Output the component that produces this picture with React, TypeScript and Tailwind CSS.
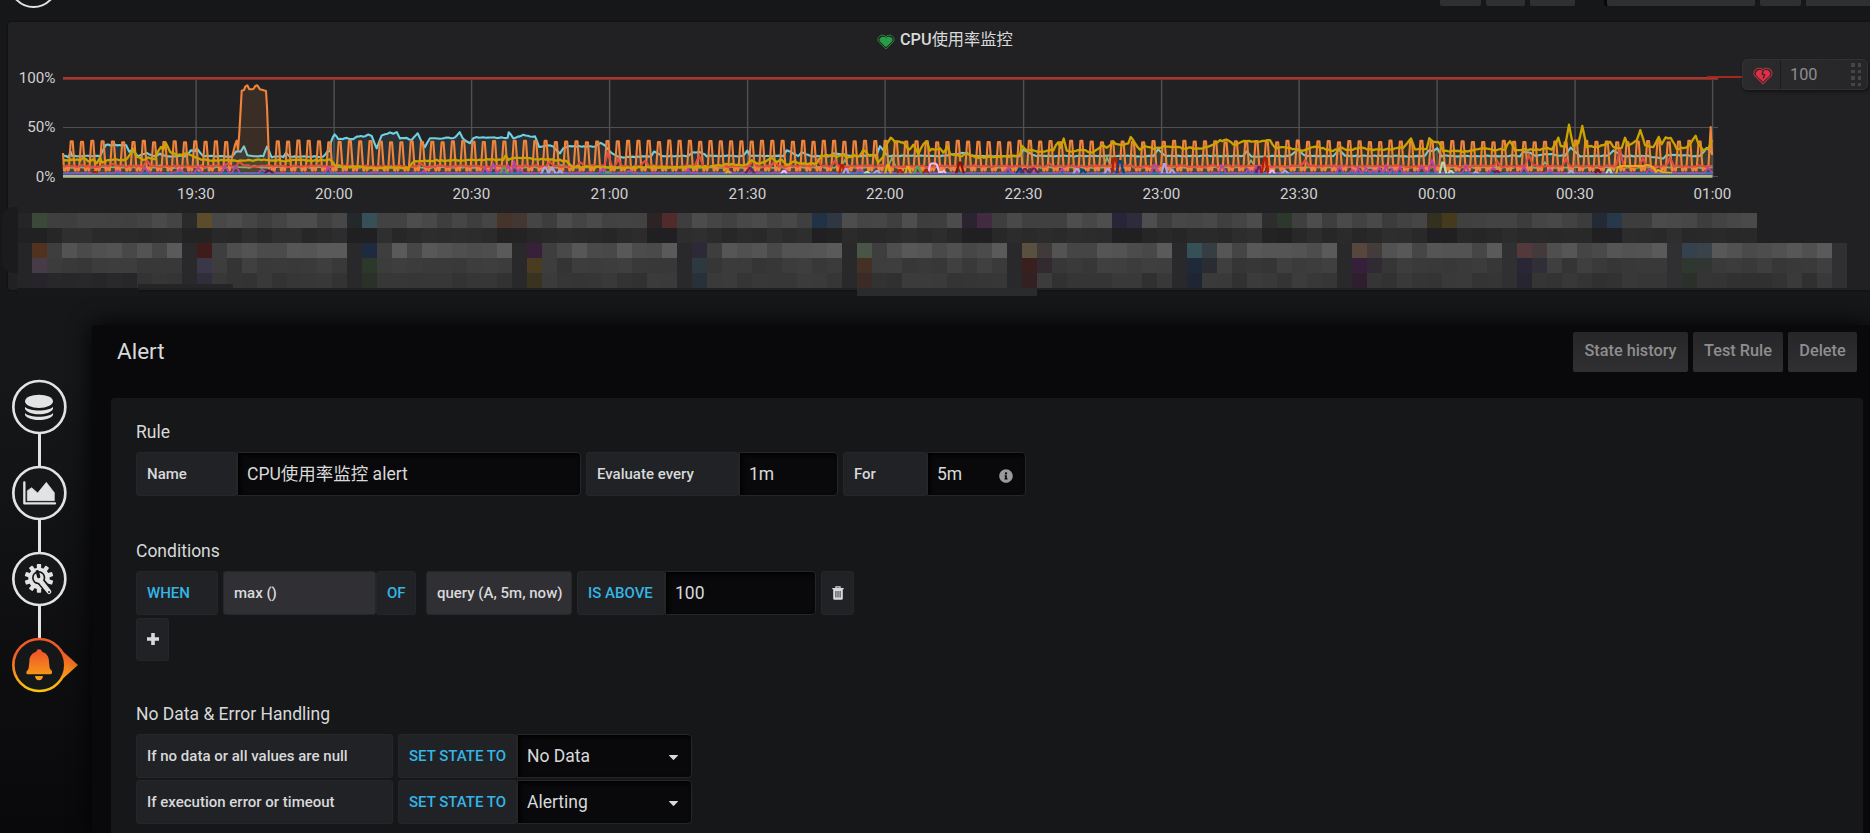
import React from "react";
import { FaInfoCircle } from "react-icons/fa";

type Pt = [number, number];

const BOTTOM = 177;

const noise = (n: number) => {
  const v = Math.sin(n * 12.9898) * 43758.5453;
  return v - Math.floor(v);
};

/* Points are stored as flat x,y lists in thirds of a pixel from a segment origin. */
const seg = (x0: number, flat: number[]): Pt[] => {
  const out: Pt[] = [];
  for (let i = 0; i < flat.length; i += 2) out.push([x0 + flat[i] / 3, 70 + flat[i + 1] / 3]);
  return out;
};

const roughen = (pts: Pt[], amp: number, seed: number): Pt[] => {
  const out: Pt[] = [];
  for (let i = 0; i < pts.length - 1; i++) {
    const [ax, ay] = pts[i];
    const [bx, by] = pts[i + 1];
    const n = Math.max(1, Math.round((bx - ax) / 2.3));
    for (let j = 0; j < n; j++) {
      const t = j / n;
      const jitter = (noise(seed + i * 7.3 + j * 3.1) - 0.5) * 2 * amp;
      out.push([ax + (bx - ax) * t, ay + (by - ay) * t + jitter]);
    }
  }
  out.push(pts[pts.length - 1]);
  return out;
};

const line = (pts: Pt[]) => "M" + pts.map((p) => p[0].toFixed(1) + " " + p[1].toFixed(1)).join("L");
const area = (pts: Pt[]) =>
  line(pts) + "L" + pts[pts.length - 1][0].toFixed(1) + " " + BOTTOM + "L" + pts[0][0].toFixed(1) + " " + BOTTOM + "Z";

const cyan = roughen(
  [
    ...seg(0, [190,256,205,262,212,245,216,258,300,258,318,225,378,225,388,245,395,240,415,258,440,250,460,258,480,252,500,258,560,258,572,240,585,245,590,235,608,258,695,260,708,245,722,245,732,230,742,255,760,260,790,258,801,230,812,255,815,262,840,258,850,262,858,248,870,260,970,260,982,245,990,245,993,215,1004,192,1015,208,1040,205,1060,208,1070,200,1095,198,1105,193,1115,198,1130,236,1145,195,1155,192,1170,188,1180,192,1190,185,1200,205,1220,205,1235,210,1253,190,1265,215,1275,230,1290,205,1320,205,1365,203,1379,185,1388,205,1405,217]),
    ...seg(470, [0,218,10,205,20,202,100,203,113,203,116,186,130,205,150,198,160,195,180,200,195,200,207,230,240,225,250,230,270,250,280,235,300,228,375,230,392,220,405,225,420,245,440,258,460,262,545,258,552,245,575,258,655,258,665,248,690,245,710,258,820,258,832,242,840,258,940,258,950,240,985,258,995,248,1020,258,1080,258,1090,250,1150,258,1220,255,1230,230,1243,245,1255,258,1405,258]),
    ...seg(940, [0,258,80,248,95,258,240,258,250,238,270,250,285,258,640,258,655,238,665,250,680,258,910,258,920,245,935,260,1050,258,1075,238,1095,258,1180,258,1196,238,1215,258,1345,258]),
    ...seg(1390, [0,258,105,258,115,240,130,245,142,236,155,258,390,258,400,245,420,248,440,258,470,252,525,258,542,232,555,245,570,258,655,258,670,242,700,258,770,258,820,265,830,255,930,258,950,235,967,250]),
  ],
  0.5,
  3,
);

const yellow = roughen(
  [
    ...seg(0, [190,270,240,270,250,262,265,272,280,268,290,280,300,262,306,278,330,270,375,270,390,255,400,238,410,262,430,268,450,262,465,270,475,240,483,232,490,240,498,220,510,245,530,255,560,252,590,262,610,270,740,272,785,268,850,272,990,270,998,278,1005,285,1030,292,1070,290,1100,293,1225,293,1240,275,1260,272,1380,270,1405,268]),
    ...seg(470, [0,270,100,270,107,258,115,270,140,262,200,268,290,272,305,290,430,292,720,290,780,282,800,285,830,285,845,270,865,280,885,275,905,265,920,275,935,268,950,285,975,275,1000,282,1040,280,1055,258,1080,255,1100,260,1120,255,1130,265,1150,255,1165,262,1180,240,1200,258,1215,255,1225,275,1240,260,1250,220,1262,205,1275,215,1300,215,1318,240,1330,222,1345,250,1360,222,1370,215,1380,240,1405,236]),
    ...seg(940, [0,235,10,250,22,228,30,250,60,258,85,252,110,262,200,260,240,255,245,228,260,240,300,245,340,240,355,215,362,235,371,205,380,240,400,245,430,240,455,250,475,235,490,225,500,235,520,215,535,225,565,222,572,200,585,220,600,240,615,228,640,235,670,230,700,232,760,235,790,235,820,225,840,212,865,210,880,225,920,212,960,215,990,212,1005,235,1030,232,1090,240,1120,230,1150,235,1180,242,1205,235,1230,240,1260,232,1300,240,1345,238]),
    ...seg(1390, [0,240,40,232,63,205,75,238,110,235,118,203,130,215,145,215,160,242,220,245,270,235,320,240,345,238,360,212,375,240,450,238,470,232,485,238,505,205,512,230,525,230,537,165,550,230,565,220,577,168,590,230,610,230,640,228,660,215,670,232,695,235,705,205,715,230,740,210,751,178,765,225,790,232,806,200,815,225,827,203,842,205,860,235,880,235,895,230,917,195,925,220,940,242,955,235,966,210]),
  ],
  0.8,
  11,
);

const plateau = seg(0, [690,300,696,262,705,225,710,212,714,240,718,190,725,62,732,60,736,50,742,46,748,58,757,58,762,55,766,48,772,46,780,58,788,60,798,63,801,110,804,190,808,300]);

const orange: Pt[] = (() => {
  const out: Pt[] = [[63, 153], [64, 170.5]];
  let plateauDrawn = false;
  for (let k = 0; k < 160; k++) {
    const x = 71.8 + k * 10.303;
    if (x > 235 && x < 270) {
      if (!plateauDrawn) out.push(...plateau);
      plateauDrawn = true;
      continue;
    }
    if (x > 1708) break;
    const top = 140.6 + noise(k + 5) * 1.8;
    out.push([x - 6.4, 170.6], [x - 5.9, 167.6], [x - 4.4, 167.6], [x - 3.8, 170.6], [x - 3.1, 170.2], [x - 1.1, top], [x + 0.9, top], [x + 3, 170.4]);
  }
  out.push([1706, 168], [1708.5, 165], [1710.7, 127], [1712, 155]);
  return out;
})();

const bumps = (base: number, amp: number, list: [number, number][], seed: number): Pt[] => {
  const out: Pt[] = [[63, base]];
  let last = 63;
  for (const [x, y] of list) {
    if (x - 4 > last) out.push([x - 4, base]);
    out.push([x, y]);
    last = x + 4;
    out.push([last, base]);
  }
  out.push([1712.5, base]);
  return roughen(out, amp, seed);
};

const red = bumps(166.2, 0.9, [[112,164],[147,161],[228,163],[240,162],[420,163],[550,161],[580,162],[608,153],[618,160],[645,160],[699,155],[753,161],[775,161],[818,160],[835,161],[880,164],[1050,164],[1305,160],[1497,161],[1529,155],[1566,159],[1620,149],[1643,158],[1670,158]], 21);
const green = bumps(167.4, 0.6, [[160,165],[255,166],[561,165],[845,160],[892,158],[1107,158],[1130,164],[1251,160],[1268,165],[1440,165],[1545,162]], 25);
const magenta = bumps(173.2, 0.9, [[118,171],[145,167],[180,170],[198,167],[225,166],[236,166],[262,170],[328,168],[375,171],[424,171],[485,168],[493,164],[501,169],[508,166],[514,161],[520,168],[603,169],[630,170],[688,170],[730,171],[785,170],[860,169],[1008,168],[1062,169],[1155,164],[1222,166],[1248,169],[1256,167],[1340,167],[1352,170],[1358,169],[1366,168],[1372,170],[1379,168],[1386,166],[1392,169],[1400,168],[1422,166],[1432,160],[1466,166],[1493,168],[1524,167],[1550,169],[1650,169],[1708,168]], 31);

/* Short-lived series that only rise above the axis for a moment. */
const blips: [string, number, number, number][] = [
  ["#bf1b00", 95, 172, 3], ["#511749", 269, 170.5, 5], ["#629e51", 504, 168, 4], ["#629e51", 608, 172, 3],
  ["#aea2e0", 545, 167.5, 4], ["#aea2e0", 552, 168, 4], ["#aea2e0", 560, 171, 3],
  ["#6d1f62", 750, 168, 5], ["#f9bafb", 784, 171, 3], ["#e5ac0e", 728, 171.5, 3],
  ["#bf1b00", 842, 165, 3], ["#aea2e0", 846, 169, 3], ["#b7dbab", 867, 172, 3], ["#aea2e0", 877, 171, 4],
  ["#e5ac0e", 888, 165, 3], ["#bf1b00", 900, 170, 3], ["#e5ac0e", 908, 167, 3], ["#629e51", 918, 167, 4],
  ["#bf1b00", 926, 170, 3], ["#890f02", 960, 162.5, 4],
  ["#0a437c", 1020, 168.5, 4], ["#6d1f62", 1025, 169, 5], ["#6d1f62", 1034, 168.5, 5],
  ["#aea2e0", 1077, 169, 4], ["#0a437c", 1083, 170, 3], ["#aea2e0", 1108, 169, 4],
  ["#bf1b00", 1115, 158, 3.5], ["#0a437c", 1120, 161, 4], ["#aea2e0", 1164.5, 164, 3], ["#aea2e0", 1172, 170, 3],
  ["#6d1f62", 1259, 167, 3], ["#bf1b00", 1265, 157.5, 3.5], ["#f9bafb", 1272, 170.5, 3], ["#aea2e0", 1285, 171, 4],
  ["#b7dbab", 1443, 162.5, 3.5], ["#b7dbab", 1451, 171, 3], ["#aea2e0", 1476, 172, 3], ["#6d1f62", 1497, 171, 3],
  ["#aea2e0", 1571, 171, 3], ["#890f02", 1598, 170, 3], ["#b7dbab", 1609, 169.5, 3],
];

const ticks: [number, string][] = [
  [196, "19:30"], [334, "20:00"], [471.5, "20:30"], [609.5, "21:00"], [747.5, "21:30"], [885, "22:00"],
  [1023.5, "22:30"], [1161.5, "23:00"], [1299, "23:30"], [1437, "00:00"], [1575, "00:30"], [1712.5, "01:00"],
];

function Chart() {
  return (
    <svg className="block h-[150px] w-[1862px]" viewBox="8 55 1862 150">
      {ticks.map(([x]) => (
        <rect key={x} x={x - 0.6} y={78} width={1.4} height={99} fill="#505052" />
      ))}
      <rect x={63} y={127} width={1655} height={1} fill="#505052" />
      <rect x={1713} y={176} width={5} height={1} fill="#505052" />
      <path d={area(cyan)} fill="#6ed0e0" opacity={0.1} />
      <path d={line(cyan)} fill="none" stroke="#6ed0e0" strokeWidth={2.1} strokeLinejoin="round" />
      <path d={area(orange)} fill="#ef843c" opacity={0.12} />
      <path d={area(yellow)} fill="#cca300" opacity={0.1} />
      <path d={line(green)} fill="none" stroke="#7eb26d" strokeWidth={1.8} />
      <path d={line(orange)} fill="none" stroke="#ef843c" strokeWidth={2.1} strokeLinejoin="round" />
      <path d={line(red)} fill="none" stroke="#e24d42" strokeWidth={2.1} />
      <path d={line(yellow)} fill="none" stroke="#cca300" strokeWidth={2.3} strokeLinejoin="round" />
      <path d="M63 172.8H1712.5" stroke="#1f78c1" strokeWidth={1.6} />
      <path d={line(magenta)} fill="none" stroke="#ba43a9" strokeWidth={1.9} />
      <path d="M1616 174l2-7 4-1h20l6-1 5 2 3 5 2-2 4 2 10 1" fill="none" stroke="#e5ac0e" strokeWidth={2} />
      <path d="M928 174l2-9 1.500-1.500h4l1.500 1.500 2 7 3 0 2-1 2 2" fill="none" stroke="#f9bafb" strokeWidth={2} />
      {blips.map(([color, x, y, w], i) => (
        <path key={i} d={`M${x - w} 174L${x - 0.7} ${y}h1.4L${x + w} 174`} fill="none" stroke={color} strokeWidth={2.2} />
      ))}
      <rect x={63} y={173} width={1649.5} height={1} fill="#3f7fb0" opacity={0.7} />
      <rect x={63} y={174} width={1649.5} height={1} fill="#5b4a9b" />
      <rect x={63} y={175} width={1649.5} height={2} fill="#9ac48a" />
      <rect x={63} y={177} width={1649.5} height={1} fill="#a08c62" />
      <rect x={63} y={77} width={1655} height={2} fill="#a8362b" />
      <rect x={63} y={79} width={1655} height={1} fill="#753432" />
      <rect x={1707} y={76} width={35} height={2} fill="#a5281d" />
      <g fill="#d0d1d2" fontFamily="Roboto, sans-serif" fontSize={15.2}>
        <text x={55.5} y={83} textAnchor="end">100%</text>
        <text x={55.5} y={132} textAnchor="end">50%</text>
        <text x={55.5} y={181.5} textAnchor="end">0%</text>
        {ticks.map(([x, label]) => (
          <text key={label} x={x} y={199} textAnchor="middle">{label}</text>
        ))}
      </g>
    </svg>
  );
}

/* Pixelated legend: 15px cells, five rows. */
const swatches: Record<number, Record<number, string>> = {
  0: { 1: "#3b4a38", 11: "#2a2a2a", 12: "#5c4c2a", 22: "#23282b", 23: "#374f57", 32: "#46332a", 33: "#433633", 42: "#2b2324", 43: "#512b2b", 53: "#213244", 54: "#2f3742", 63: "#2b2430", 64: "#432a43", 73: "#26253a", 74: "#2e2b3c", 83: "#2d2d2e", 84: "#2d382c", 94: "#34301f", 95: "#453a1b", 105: "#232a35", 106: "#27384a" },
  1: { 0: "#212123", 1: "#212123", 11: "#232324", 12: "#232324", 22: "#202022", 23: "#202022", 32: "#222223", 33: "#232324", 42: "#202022", 43: "#202022", 53: "#202022", 54: "#222223", 63: "#202022", 64: "#202022", 73: "#202022", 74: "#202022", 83: "#232324", 84: "#212122", 94: "#202022", 95: "#202022", 105: "#202022", 106: "#202022" },
  2: { 1: "#51321f", 12: "#3f1c1b", 23: "#1d2a40", 34: "#38203a", 45: "#2d2938", 56: "#495647", 67: "#5a5040", 68: "#403a3b", 78: "#355057", 79: "#363e44", 89: "#57463b", 90: "#433c3b", 100: "#53383c", 101: "#433a3b", 111: "#35424e", 112: "#3a434a" },
  3: { 1: "#463b46", 12: "#3a3848", 23: "#2c382a", 34: "#493c20", 45: "#2c393f", 56: "#453026", 67: "#3a1f1f", 68: "#312b30", 78: "#1e293a", 79: "#2b2c33", 89: "#35203a", 90: "#302a34", 100: "#292736", 101: "#302f38", 111: "#2f382f", 112: "#323632" },
  4: { 1: "#28242b", 2: "#28282a", 3: "#272729", 4: "#28282a", 5: "#262628", 6: "#29292b", 7: "#272729", 12: "#302e3a", 23: "#293129", 34: "#3a3320", 45: "#28313a", 56: "#3a2b27", 67: "#332023", 78: "#202534", 89: "#2f1f2e", 100: "#27252f", 111: "#2b302b" },
};
const ranges = [[60, 78], [38, 47], [68, 90], [52, 64], [48, 60]];

const cellColor = (row: number, k: number) => {
  const fixed = swatches[row][k];
  if (fixed) return fixed;
  if (k === 0) return "#252527";
  if (row > 1 && k % 11 === 0) return k < 90 ? "#29292b" : "#303032";
  const [lo, hi] = ranges[row];
  let v = lo + noise(row * 131 + k * 1.7) * (hi - lo);
  if (row === 2 && k % 11 === 2) v = 62;
  if (row === 2 && k % 11 === 10) v = 90;
  const g = Math.round(v);
  return `rgb(${g},${g},${g + 1})`;
};

function BlurredLegend() {
  return (
    <div className="relative ml-[9px] mt-[8px]">
      <div className="absolute -left-[15px] -top-[6px] h-[66px] w-[16px] rounded-l-[12px] bg-[#1b1b1d]" />
      {[0, 1, 2, 3, 4].map((row) => (
        <div key={row} className="flex">
          {Array.from({ length: row < 2 ? 116 : 122 }, (_, k) => (
            <div key={k} className="h-[15px] w-[15px] shrink-0" style={{ backgroundColor: cellColor(row, k) }} />
          ))}
        </div>
      ))}
      <div className="absolute left-0 top-[75px] h-[8px] w-[121px] bg-[#17181a]" />
      <div className="absolute left-[121px] top-[71px] h-[4px] w-[95px] bg-[#252527]" />
      <div className="absolute left-[840px] top-[75px] h-[8px] w-[180px] bg-[#2b2b2d]" />
    </div>
  );
}

const HEART = "M8 15L1 8.200A4 4 0 0 1 1.400 2.400 3.600 3.600 0 0 1 4 1.200H5.200A3 3 0 0 1 8 3 3 3 0 0 1 10.800 1.200H12A3.600 3.600 0 0 1 14.600 2.400 4 4 0 0 1 15 8.200Z";

function HeartIcon({ broken, className }: { broken?: boolean; className: string }) {
  return (
    <svg viewBox="-0.5 0 17 16" className={className}>
      <path d={HEART} fill="none" stroke="currentColor" strokeWidth={0.9} opacity={0.85} />
      <path d={HEART} fill="currentColor" transform="translate(1.7 1.8) scale(.79 .76)" />
      {broken && <path d="M8.300 2.800L7.200 6.200 9.400 6.800 8.200 10.200" fill="none" stroke="#29292b" strokeWidth={1.1} />}
    </svg>
  );
}

function ThresholdHandle() {
  return (
    <div className="absolute left-[1734px] top-[37px] flex h-[31px] w-[126px] items-stretch rounded-[5px] border border-[#323234] bg-gradient-to-r from-[#2b2b2d] to-[#262628] shadow-[1px_2px_3px_#141416]">
      <div className="flex w-[38px] items-center justify-center border-r border-[#1c1c1e] pl-[2px] pt-[2px]">
        <HeartIcon broken className="h-[18px] w-[20px] text-[#e02f44]" />
      </div>
      <span className="flex-1 pl-[9px] text-[16.25px] leading-[30px] text-[#8e8e8e]">100</span>
      <div className="grid grid-cols-2 content-center gap-x-[3px] gap-y-[3px] pr-[6px]">
        {Array.from({ length: 8 }, (_, i) => (
          <i key={i} className="h-[3.500px] w-[3.500px] bg-[#454547]" />
        ))}
      </div>
    </div>
  );
}

function TabIcon({ children, active, link }: { children: React.ReactNode; active?: boolean; link?: boolean }) {
  const paint = active ? "url(#flame)" : "#e3e3e3";
  return (
    <svg viewBox="0 0 240 258" className="block h-[86px] w-[80px] overflow-visible">
      <defs>
        <linearGradient id="flame" gradientUnits="userSpaceOnUse" x1="0" y1="0" x2="0" y2="166">
          <stop offset="0.3" stopColor="#f05a28" />
          <stop offset="1" stopColor="#fbca0a" />
        </linearGradient>
      </defs>
      {active && <path d="M170 26L234 84 170 142Q205 84 170 26Z" fill={paint} />}
      <circle cx="118" cy="84" r="78" fill="#161719" stroke={paint} strokeWidth="8" />
      {link && <path d="M118.500 164V262" stroke="#e3e3e3" strokeWidth="9" />}
      <g fill={paint}>{children}</g>
    </svg>
  );
}

function GearWrench() {
  return (
    <>
      {Array.from({ length: 10 }, (_, i) => (
        <rect key={i} x="110.500" y="39" width="13" height="16" rx="2" transform={`rotate(${i * 36} 117 82)`} />
      ))}
      <circle cx="117" cy="82" r="32" />
      <circle cx="116" cy="80" r="20" fill="#161719" />
      <path d="M118 86L148 121" stroke="#161719" strokeWidth="24" strokeLinecap="round" />
      <path d="M119 87L147 122" stroke="#e3e3e3" strokeWidth="14" strokeLinecap="round" />
      <circle cx="116" cy="80" r="15" />
      <path d="M112 62L116 77" stroke="#161719" strokeWidth="10" strokeLinecap="round" />
      <circle cx="147" cy="123" r="3" fill="#161719" />
    </>
  );
}

function SideTabs() {
  return (
    <nav className="w-[92px] shrink-0 pt-[54px]">
      <TabIcon link>
        <ellipse cx="117" cy="67" rx="42" ry="20" />
        <path d="M75 83C88 98 146 98 159 83V90C148 111 86 111 75 90Z" />
        <path d="M75 102C88 117 146 117 159 102V108C148 128 86 128 75 108Z" />
      </TabIcon>
      <TabIcon link>
        <path d="M73 52V115H165" fill="none" stroke="#e3e3e3" strokeWidth="7" strokeLinecap="round" strokeLinejoin="round" />
        <path d="M82 107V77L95 68 113 84 139 52 163 83V107Z" stroke="#e3e3e3" strokeWidth="2" strokeLinejoin="round" />
      </TabIcon>
      <TabIcon link>
        <GearWrench />
      </TabIcon>
      <TabIcon active>
        <path d="M117 37C121 37 125 39 126 44 142 49 147 60 147 74L149 92Q150 97 154 99 157 103 156 108Q155 112 151 112H83Q79 112 79 107 79 101 84 98L86 92 88 74C88 60 93 49 109 44 110 39 113 37 117 37Z" />
        <path d="M105 117H129Q127 130 117 130 107 130 105 117Z" />
      </TabIcon>
    </nav>
  );
}

const Label = ({ children, className }: { children: React.ReactNode; className: string }) => (
  <div className={"flex h-full shrink-0 items-center whitespace-pre rounded-[3px] border border-[#262628] pl-[10px] text-[15px] font-medium " + className}>
    {children}
  </div>
);

const Field = ({ children, className }: { children: React.ReactNode; className: string }) => (
  <div className={"flex h-full shrink-0 items-center whitespace-pre rounded-r-[4px] border border-[#262628] bg-[#09090b] pl-[9px] text-[17.5px] shadow-[inset_2px_2px_4px_#000] " + className}>
    {children}
  </div>
);

const Row = ({ children, className = "h-[44px]" }: { children: React.ReactNode; className?: string }) => (
  <div className={"flex " + className}>{children}</div>
);

const Heading = ({ children }: { children: React.ReactNode }) => (
  <h5 className="h-[36px] text-[17.5px] leading-[33px]">{children}</h5>
);

const DARK = "bg-[#212226]";
const LIGHT = "bg-[#2f2f34]";
const BLUE = "bg-[#212226] text-[#33b5e5]";

const TrashIcon = () => (
  <svg viewBox="0 0 12 14" className="h-[14px] w-[12px]">
    <path d="M.3 2.6h11.400M4 2.500V.8h4v1.700" fill="none" stroke="#d8d9da" strokeWidth="1.300" />
    <path d="M1.200 3h9.600V12.500a1.200 1.200 0 0 1-1.200 1.200H2.400a1.200 1.200 0 0 1-1.200-1.200Z" fill="#d8d9da" />
    <path d="M3.900 5v6.500M6 5v6.500M8.100 5v6.500" stroke="#212226" strokeWidth=".9" />
  </svg>
);

const PlusIcon = () => (
  <svg viewBox="0 0 12 12" className="mb-[1px] h-[12px] w-[12px]">
    <path d="M6 .8V11.200M.8 6H11.200" stroke="#d8d9da" strokeWidth="3.600" strokeLinecap="round" />
  </svg>
);

const Caret = () => (
  <svg viewBox="0 0 9 5" className="mt-[3px] h-[5px] w-[9px]">
    <path d="M.5 0h8a.4.4 0 0 1 .3.700L4.900 4.800a.5.5 0 0 1-.8 0L.2.700A.4.400 0 0 1 .5 0Z" fill="#d8d9da" />
  </svg>
);

const ActionButton = ({ children, className }: { children: string; className: string }) => (
  <button className={"h-[40px] rounded-[2px] bg-gradient-to-b from-[#262628] to-[#303032] pb-[1px] text-[16.25px] font-medium text-[#8e8e8e] " + className}>
    {children}
  </button>
);

export default function App() {
  return (
    <div className="flex h-[833px] w-[1870px] flex-col overflow-hidden bg-[#161719] bg-gradient-to-b from-[#161719] from-[45%] to-[#09090b] font-['Roboto','Noto_Sans_CJK_SC',sans-serif] text-[#d8d9da]">
      <header className="flex h-[22px] shrink-0 items-start">
        <svg viewBox="0 0 80 22" className="h-[22px] w-[80px]">
          <circle cx="33.500" cy="-16.500" r="23.500" fill="none" stroke="#e3e3e3" strokeWidth="2" />
        </svg>
        <div className="ml-auto flex h-[6px] gap-[5px]">
          <div className="w-[41px] rounded-b-[2px] bg-[#303032]" />
          <div className="w-[39px] rounded-b-[2px] bg-[#303032]" />
          <div className="w-[45px] rounded-b-[2px] bg-[#303032]" />
          <div className="ml-[27px] w-[148px] rounded-b-[2px] bg-[#303032] shadow-[-3px_0_0_#09090b]" />
          <div className="w-[41px] rounded-b-[2px] bg-[#303032]" />
          <div className="w-[64px] bg-[#303032]" />
        </div>
      </header>

      <section className="relative ml-[8px] h-[268px] shrink-0 rounded-l-[3px] bg-[#212124] shadow-[0_0_2px_#0b0b0c]">
        <div className="flex h-[33px] items-center pl-[869px] pt-[3px]">
          <HeartIcon className="mt-[3px] h-[16px] w-[18px] text-[#299c46]" />
          <h2 className="ml-[5px] text-[16.25px] font-medium leading-[22px]">
            CPU<span className="font-normal">使用率监控</span>
          </h2>
        </div>
        <Chart />
        <BlurredLegend />
        <ThresholdHandle />
      </section>

      <div className="mt-[35px] flex min-h-0 flex-1">
        <SideTabs />
        <main className="flex flex-1 flex-col rounded-tl-[4px] bg-[#09090b] pl-[19px] pr-[7px] shadow-[0_0_25px_#000]">
          <div className="flex h-[73px] shrink-0 items-start justify-between pl-[6px] pr-[6px] pt-[7px]">
            <h3 className="text-[22.5px] leading-[38px]">Alert</h3>
            <div className="flex gap-[5px]">
              <ActionButton className="w-[115px]">State history</ActionButton>
              <ActionButton className="w-[90px]">Test Rule</ActionButton>
              <ActionButton className="w-[69px]">Delete</ActionButton>
            </div>
          </div>
          <div className="flex-1 rounded-t-[4px] bg-[#161719] pl-[25px] pt-[18px]">
            <Heading>Rule</Heading>
            <Row>
              <Label className={"w-[101px] " + DARK}>Name</Label>
              <Field className="w-[344px]">CPU使用率监控 alert</Field>
              <Label className={"ml-[5px] w-[153px] " + DARK}>Evaluate every</Label>
              <Field className="w-[99px]">1m</Field>
              <Label className={"ml-[5px] w-[84px] " + DARK}>For</Label>
              <Field className="w-[99px] justify-between pr-[12px]">
                5m
                <FaInfoCircle className="mt-[3px] text-[14px] text-[#9a9a9a]" />
              </Field>
            </Row>

            <div className="mt-[39px]">
              <Heading>Conditions</Heading>
            </div>
            <Row>
              <Label className={"w-[82px] " + BLUE}>WHEN</Label>
              <Label className={"ml-[5px] w-[153px] " + LIGHT}>max ()</Label>
              <Label className={"w-[40px] " + BLUE}>OF</Label>
              <Label className={"ml-[10px] w-[146px] " + LIGHT}>query (A, 5m, now)</Label>
              <Label className={"ml-[5px] w-[88px] " + BLUE}>IS ABOVE</Label>
              <Field className="w-[151px]">100</Field>
              <Label className={"ml-[5px] w-[33px] " + DARK}>
                <TrashIcon />
              </Label>
            </Row>
            <Row className="mt-[3px] h-[43px]">
              <Label className={"w-[33px] " + DARK}>
                <PlusIcon />
              </Label>
            </Row>

            <div className="mt-[37px]">
              <Heading>No Data &amp; Error Handling</Heading>
            </div>
            {[
              ["If no data or all values are null", "No Data"],
              ["If execution error or timeout", "Alerting"],
            ].map(([label, value]) => (
              <Row key={label} className="mb-[2px] h-[44px]">
                <Label className={"w-[257px] " + DARK}>{label}</Label>
                <Label className={"ml-[5px] w-[119px] " + BLUE}>SET STATE TO</Label>
                <Field className="w-[175px] justify-between pr-[13px]">
                  {value}
                  <Caret />
                </Field>
              </Row>
            ))}
          </div>
        </main>
      </div>
    </div>
  );
}
